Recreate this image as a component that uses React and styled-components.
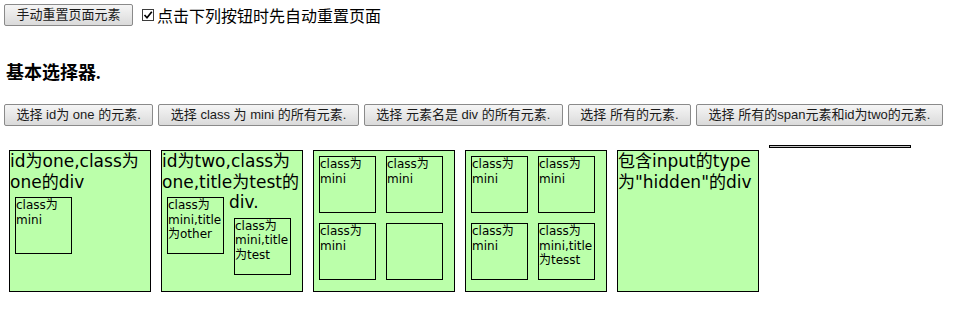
import React from 'react';
import styled, { createGlobalStyle, css } from 'styled-components';

const GlobalStyle = createGlobalStyle`
  html, body {
    margin: 0;
    padding: 0;
    background: #fff;
  }
  body {
    font-family: "Liberation Sans", "Noto Sans CJK SC", sans-serif;
    color: #000;
  }
`;

const buttons = [
  '选择 id为 one 的元素.',
  '选择 class 为 mini 的所有元素.',
  '选择 元素名是 div 的所有元素.',
  '选择 所有的元素.',
  '选择 所有的span元素和id为two的元素.',
];

const App = () => {
  return (
    <Page>
      <GlobalStyle />
      <TopBar>
        <Button type="button">手动重置页面元素</Button>
        <AutoReset>
          <CheckBox>
            <svg width="10" height="10" viewBox="0 0 10 10">
              <polyline points="1.5,5 4,7.8 8.8,1.8" fill="none" stroke="#000" strokeWidth="1.7" />
            </svg>
          </CheckBox>
          点击下列按钮时先自动重置页面
        </AutoReset>
      </TopBar>

      <Title>基本选择器.</Title>

      <ButtonRow>
        {buttons.map((label) => (
          <Button type="button" key={label}>{label}</Button>
        ))}
      </ButtonRow>

      <Stage>
        <Box>
          id为one,class为one的div
          <Mini>class为mini</Mini>
        </Box>
        <Box>
          id为two,class为one,title为test的div.
          <Mini>class为mini,title为other</Mini>
          <Mini>class为mini,title为test</Mini>
        </Box>
        <Box>
          <Mini>class为mini</Mini>
          <Mini>class为mini</Mini>
          <Mini>class为mini</Mini>
          <Mini />
        </Box>
        <Box>
          <Mini>class为mini</Mini>
          <Mini>class为mini</Mini>
          <Mini>class为mini</Mini>
          <Mini>class为mini,title为tesst</Mini>
        </Box>
        <Box>
          包含input的type为"hidden"的div
        </Box>
        {/* span caught mid slideToggle, almost no height left */}
        <Mover />
      </Stage>
    </Page>
  );
};

export default App;

const Page = styled.div`
  padding: 4px 4px 0;
`;

const TopBar = styled.div`
  display: flex;
  align-items: center;
  height: 22px;
`;

const Button = styled.button`
  height: 22px;
  margin: 0;
  padding: 0 11.5px;
  font-family: "Liberation Sans", "Noto Sans CJK SC", sans-serif;
  font-size: 13px;
  line-height: 20px;
  color: #1a1a1a;
  white-space: nowrap;
  background: linear-gradient(#f5f5f5, #e8e8e8 50%, #dadada);
  border: 1px solid #8a8a8a;
  border-radius: 2px;
`;

const AutoReset = styled.label`
  display: flex;
  align-items: center;
  margin-left: 9px;
  font-family: "Noto Sans CJK SC", sans-serif;
  font-size: 16px;
  line-height: 22px;
`;

const CheckBox = styled.span`
  display: flex;
  align-items: center;
  justify-content: center;
  box-sizing: border-box;
  width: 12px;
  height: 12px;
  margin-right: 3px;
  background: #fff;
  border: 1px solid #3c3c3c;
`;

const Title = styled.h3`
  margin: 35px 0 0 2px;
  font-family: "Liberation Serif", "Noto Sans CJK SC", serif;
  font-size: 18px;
  line-height: 24px;
  font-weight: bold;
`;

const ButtonRow = styled.div`
  display: flex;
  gap: 5px;
  margin-top: 19px;
`;

const Stage = styled.div`
  display: flow-root;
  margin-top: 19px;
`;

const block = css`
  float: left;
  margin: 5px;
  background: #bbffaa;
  border: 1px solid #000;
  font-family: "DejaVu Sans", Verdana, "Noto Sans CJK SC", sans-serif;
`;

const Box = styled.div`
  ${block};
  width: 140px;
  height: 140px;
  font-size: 17px;
  line-height: 20.5px;
`;

const Mini = styled.div`
  ${block};
  width: 55px;
  height: 55px;
  font-size: 12px;
  line-height: 14.5px;
`;

const Mover = styled.span`
  ${block};
  width: 140px;
  height: 1px;
  margin: 0 5px;
  background: #c4c4c4;
`;
